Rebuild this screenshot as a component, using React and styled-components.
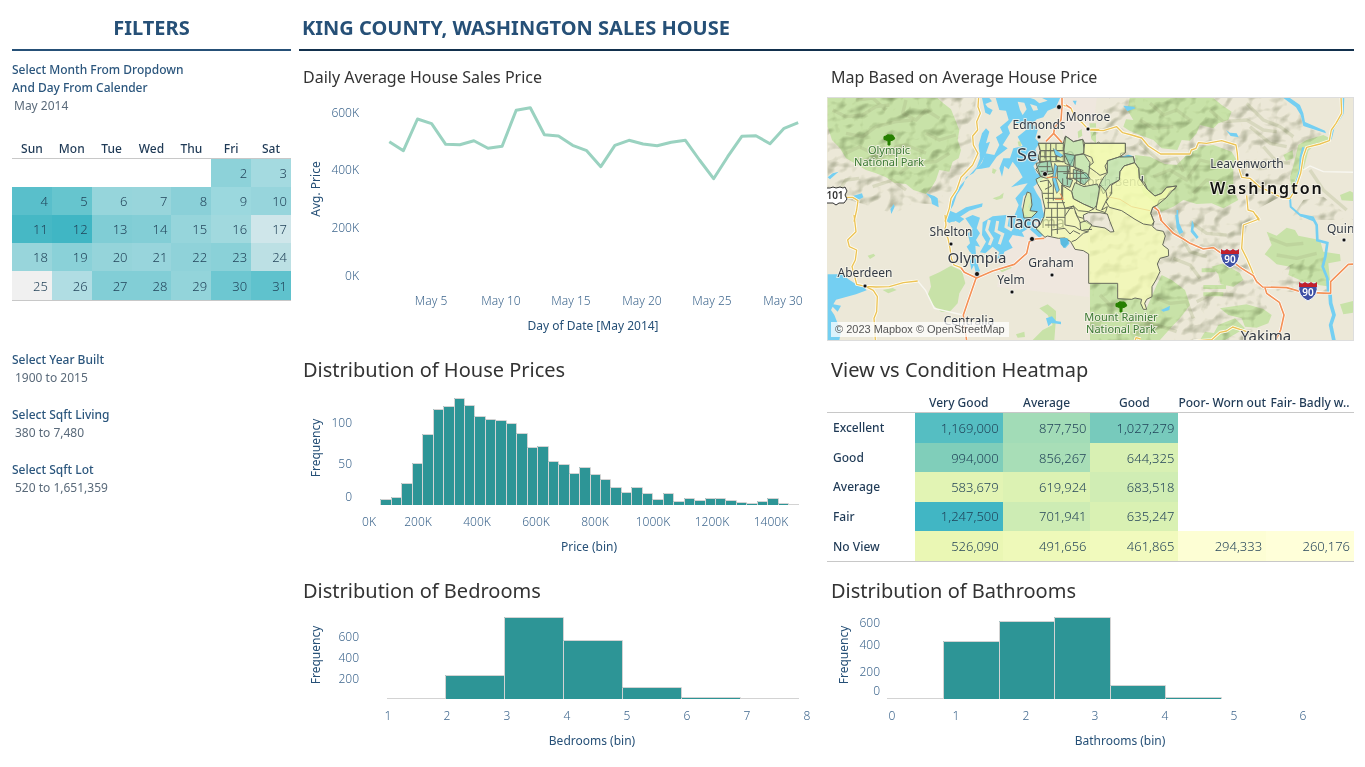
import React from "react";
import styled, { createGlobalStyle } from "styled-components";

const FONT = '"Noto Sans", "Open Sans", "Liberation Sans", sans-serif';
const TEAL = "#2d9596";

const GlobalStyle = createGlobalStyle`
  * { box-sizing: border-box; }
  body { margin: 0; background: #fff; font-family: ${FONT}; font-size: 12px; color: #1f3a56; }
`;

/* ---------- page frame ---------- */

const Page = styled.div`
  display: grid;
  grid-template-columns: 279px minmax(0, 1fr);
  column-gap: 8px;
  padding: 0 11px 0 12px;
`;

const Heading = styled.h1`
  margin: 0;
  padding: 6px 3px 0;
  height: 51px;
  line-height: 43px;
  font-size: 20px;
  font-weight: 700;
  white-space: nowrap;
  color: #265077;
  text-align: ${(p) => p.$align || "left"};
  border-bottom: 2px solid ${(p) => p.$rule};
`;

const Panels = styled.div`
  display: grid;
  grid-template-columns: minmax(0, 528fr) minmax(0, 527fr);
`;

const Panel = styled.section`
  min-width: 0;
`;

const PanelTitle = styled.h2`
  margin: ${(p) => (p.$small ? "6px" : "9px")} 0 0;
  padding-left: 4px;
  line-height: 40px;
  font-size: ${(p) => (p.$small ? "16px" : "20px")};
  font-weight: 400;
  color: #333;
  white-space: nowrap;
`;

/* ---------- sidebar ---------- */

const FilterGroup = styled.div`
  padding-top: ${(p) => p.$top}px;
  line-height: 18px;
`;

const FilterLabel = styled.label`
  display: block;
  font-weight: 500;
  color: #2b567d;
`;

const FilterValue = styled.output`
  display: block;
  padding-left: 3px;
  color: #5a6a7a;
`;

const MonthSelect = styled.select`
  display: block;
  appearance: none;
  height: 18px;
  margin: 0;
  padding: 0 0 0 2px;
  border: 0;
  background: none;
  font: 400 12px/18px ${FONT};
  color: #5a6a7a;
`;

const Calendar = styled.table`
  width: 100%;
  height: 162px;
  margin-top: 24px;
  table-layout: fixed;
  border-collapse: collapse;
  border-bottom: 1px solid #c8c8c8;
`;

const DayName = styled.th`
  height: 19px;
  padding: 1px 0 0;
  line-height: 17px;
  border-bottom: 1px solid #c8c8c8;
  font-weight: 500;
`;

const Day = styled.td`
  padding: 0 4px 0 0;
  text-align: right;
  font-size: 13px;
  font-weight: 300;
  color: #1f3f56;
  background: ${(p) => p.$tone || "transparent"};
`;

/* ---------- heat map ---------- */

const Heat = styled.table`
  width: 100%;
  height: 172px;
  table-layout: fixed;
  border-collapse: collapse;
`;

const HeatHead = styled.th`
  height: 22px;
  padding: 4px 0 0;
  line-height: 18px;
  font-weight: 500;
  white-space: nowrap;
  border-bottom: 1px solid #c8c8c8;
`;

const HeatRowName = styled.th`
  padding: 0 0 0 6px;
  text-align: left;
  font-weight: 500;
`;

const HeatCell = styled.td`
  padding: 0 4px 0 0;
  text-align: right;
  font-size: 13px;
  font-weight: 300;
  color: #1f3f56;
  background: ${(p) => p.$tone || "transparent"};
`;

const HeatBody = styled.tbody`
  border-bottom: 1px solid #c8c8c8;
`;

/* ---------- charts ---------- */

const ChartSvg = styled.svg`
  display: block;
  width: 100%;
  height: auto;
  font-family: ${FONT};
  font-size: 12px;
`;

const Tick = styled.text`
  fill: #3f678e;
  font-weight: 300;
`;

const AxisTitle = styled.text`
  fill: #265077;
  font-weight: 450;
  text-anchor: middle;
`;

function Chart({ width, height, yTicks, yTickX, xTicks, xTickY, xTitle, yTitle, children, label }) {
  return (
    <ChartSvg viewBox={`0 0 ${width} ${height}`} role="img" aria-label={label}>
      <AxisTitle transform={`translate(21 ${yTitle[1]}) rotate(-90)`}>{yTitle[0]}</AxisTitle>
      {yTicks.map(([t, y]) => (
        <Tick key={t} x={yTickX} y={y} textAnchor="end">{t}</Tick>
      ))}
      {xTicks.map(([t, x]) => (
        <Tick key={t} x={x} y={xTickY} textAnchor="middle">{t}</Tick>
      ))}
      <AxisTitle x={xTitle[1]} y={xTickY + 25}>{xTitle[0]}</AxisTitle>
      {children}
    </ChartSvg>
  );
}

const PRICE_LINE = [
  425, 452, 357, 371, 433, 434, 422, 445, 439, 331, 323, 404, 408, 436, 452,
  500, 436, 421, 432, 437, 427, 421, 480, 536, 470, 409, 407, 431, 385, 368,
].map((v, i) => `${(90.3 + i * 14.1).toFixed(1)},${(v / 3 - 97).toFixed(1)}`).join(" ");

const PRICE_BINS = [
  16, 22, 64, 124, 211, 286, 295, 319, 298, 265, 257, 253, 244, 214, 172, 175,
  131, 121, 94, 113, 91, 76, 53, 37, 53, 34, 16, 34, 10, 19, 13, 19, 19, 13,
  7, 4, 10, 19, 4,
].map((v) => v / 3);

function Bars({ x, step, base, heights, lineFrom, lineTo }) {
  const edge = (i) => Math.round(x + step * i);
  return (
    <g>
      <path d={`M${lineFrom} ${base - 0.5}H${lineTo}`} stroke="#d3d3d3" />
      {heights.map((h, i) => {
        const top = base - Math.ceil(h);
        return (
          <g key={i}>
            <rect x={edge(i)} y={top} width={edge(i + 1) - edge(i)} height={base - top} fill={TEAL} />
            <path d={`M${edge(i) + 0.5} ${base}V${top + 0.5}H${edge(i + 1) + 0.5}V${base}`} fill="none" stroke="#d3d3d3" />
          </g>
        );
      })}
    </g>
  );
}

/* ---------- map ---------- */

const MapFrame = styled.div`
  position: relative;
  border-right: 1px solid #ddd;
`;

const Attribution = styled.small`
  position: absolute;
  left: 4px;
  bottom: 4px;
  padding: 0 4px;
  line-height: 15px;
  font-family: "Liberation Sans", Arial, sans-serif;
  font-size: 11px;
  color: #555;
  background: rgba(255, 255, 255, 0.75);
`;

const Relief = styled.g`
  mix-blend-mode: multiply;
  opacity: 0.55;
`;

const Place = styled.text`
  font-size: ${(p) => p.$size || 12}px;
  text-anchor: ${(p) => p.$anchor || "middle"};
  fill: ${(p) => p.$color || "#333a45"};
  stroke: #f6f4ea;
  stroke-width: 2px;
  stroke-opacity: 0.8;
  paint-order: stroke;
`;

const StateName = styled(Place)`
  font-weight: 600;
  letter-spacing: 2px;
  fill: #111;
`;

/* Artwork groups are drawn three units to the pixel. */
const at = (x, y) => `translate(${x} ${y}) scale(.33333)`;
const NW = at(-1, -7);
const NE = at(263, -7);
const SW = at(-1, 118);
const SE = at(263, 118);
const COUNTY = at(193, 33);

const GREENS = [
  [NW, "M5 20H330L352 40 375 58 388 90 400 120 395 150 405 180 398 205 380 215 370 245 340 240 330 270 318 290 300 312 262 300 240 282 205 278 180 262 150 250 120 240 95 225 60 205 42 175 18 150 5 110Z"],
  [NW, "M500 235L512 240 505 252 498 248ZM500 325L520 318 533 308 530 325 512 330ZM575 155L588 152 585 168 578 168ZM755 125l12-8 2 20-12 8ZM790 100l20 0v60l-14-12Z"],
  [NE, "M120 20H365L395 45 425 65 415 90 385 100 370 115 330 105 320 130 300 152 275 150 262 180 215 175 190 150 150 135 118 122 100 110 108 88 130 90 112 60Z"],
  [NE, "M135 195L180 200 225 222 260 225 290 195 330 170 370 165 425 185 440 210 430 235 430 300 445 330 400 355 365 340 320 342 280 330 250 350 215 365 195 340 160 310 140 260Z"],
  [NE, "M625 165L650 150 700 135 720 145 712 160 680 160 655 182 640 240 620 260 605 300 600 260 612 220ZM580 195l28-15 2 25-22 8ZM750 315l30-12 10 5v25l-35-2Z"],
  [SE, "M530 50L560 62 590 38 615 45 625 62 690 75 700 110 750 118 752 138 715 145 722 215 650 205 618 190 595 180 600 155 560 148 540 130 524 118 545 90Z"],
  [SE, "M365 155L400 145 450 175 460 195 430 215 392 208 385 178ZM335 160l45 0-5 12-40 0ZM340 210l68 0v12l-68 0ZM340 232l60 0v12l-60 0Z"],
  [SE, "M0 205H82V250H150L165 290 200 210 215 180 245 195 285 225 300 270 270 310 250 330 210 375H0Z"],
  [SE, "M390 280L470 268 520 282 545 300 535 325 500 338 465 335 455 310 415 300ZM385 330l50-20 30 30-60 35h-45ZM345 350l30 5-15 20h-30ZM750 268l40-10v35l-30 5Z"],
  [SW, "M310 185L340 172 375 152 408 168 418 205 400 235 395 265 370 292 345 290 318 268 305 240 315 215Z"],
  [SW, "M640 280L665 268 690 288 690 310 685 375H620L650 345 680 330 665 300ZM125 122l18-6 5 6-16 10ZM170 225l30-6 12 6-25 10ZM570 358l25-8 2 16-22 2ZM520 165l30-12 8 5-30 14Z"],
];

const MOUNTAINS = [
  [NW, "M5 20H450L440 140 450 190 420 240 385 300 360 345 280 340 200 370 120 345 5 310Z"],
  [NE, "M60 20H620L640 110 700 130 640 170 610 300 440 390H0V150Z"],
  [SE, "M0 0H500L455 120 520 220 600 150 700 110 715 240 590 230 510 225 540 300 460 375H0Z"],
  [NE, "M640 330L700 320 790 390H600Z"],
];

const RIDGES = [
  [NW, "M20 60L60 80 110 75 150 50 190 45M60 130L110 140 150 110 210 95 260 90M150 220L210 170 240 165 300 190M240 30L230 70 270 90 300 60 340 85M60 190L100 170 140 190 175 165M220 250L260 220 330 215 370 190M20 330L60 270 100 265M140 290L200 270 240 300M300 130L340 150 390 135M90 30L140 24 180 60"],
  [NE, "M180 40L220 75 260 60 300 90M150 90L190 115 250 110M360 60L400 95 470 90 520 120 560 125M470 40L520 90 570 110 610 140M480 110L540 160 590 170M150 160L210 215 260 205 280 245M190 260L240 240 290 270 330 210 370 220M310 310L350 270 410 280M520 170L560 215 600 220M660 240L700 300 770 360"],
  [SE, "M225 30L270 60 300 110 350 125M250 130L300 150 330 190M300 20L350 55 410 60M200 250L240 265 290 260 310 310M320 260L370 235 430 240M30 240L60 270 110 265M120 320L200 330 260 350M540 70L590 90 640 85M560 120L620 130 680 115"],
];

const WATERS = [
  [NW, "M468 24H490L498 34 478 42 485 52 500 60 492 75 478 68Z"],
  [NW, "M508 20H704L690 52 665 62 652 82 632 88 620 102 636 118 628 145 640 160 628 178 640 208 622 228 632 250 655 262 640 275 622 290 632 310 645 330 650 360 662 395H602L620 372 606 350 618 325 610 305 592 318 586 350 598 390H560L578 345 568 325 590 300 605 280 580 285 555 292 590 262 575 235 560 215 548 238 535 228 528 260 520 235 532 205 552 205 562 175 590 168 575 140 600 120 590 98 578 105 560 90 545 110 552 130 530 165 545 175 512 200 490 232 466 236 450 238 468 218 478 190 505 195 520 165 510 142 530 128 522 112 548 90 540 62 520 60Z"],
  [NW, "M480 115L490 125 480 160 492 155 478 195 465 220 442 250 420 262 412 285 392 315 382 345 372 362 390 370 420 352 470 340 468 350 430 362 400 382 385 395H357L362 370 385 320 400 290 428 258 452 232 462 205 458 165 468 130Z"],
  [NW, "M80 318L108 310 112 322 92 332ZM300 310L325 318 335 325 338 352 318 342 315 326ZM5 262L20 250 38 245 30 252 12 268ZM203 342L206 350 196 372 193 358ZM740 32l12 0-4 14Z"],
  [SW, "M357 0H395L415 12 400 24 385 16 370 24 362 18ZM418 10L440 0 462 8 452 40 462 55 450 75 462 95 448 92 450 120 432 112 422 95 432 85 425 55 440 42ZM470 22L500 4 540 0H600L620 18 652 60 640 68 608 40 588 52 595 66 560 60 548 78 560 98 535 110 530 125 512 132 520 112 500 95 478 115 462 112 480 80 468 60Z"],
  [SW, "M5 178H52L66 192 88 206 108 210 122 226 90 238 60 246 30 254 22 268 45 272 35 290 20 275 15 285 25 300 45 350 40 375H5Z"],
  [SW, "M438 105L450 135 462 168 450 176 444 150 436 165 432 140ZM704 72L728 70 730 86 718 100 706 88ZM660 310l18-6 12 14 15 2 0 8-28-4-10 10Z"],
  [NE, "M580 24H600L630 45 640 70 645 96 705 122 708 130 640 108 632 75 618 52ZM100 47L132 50 136 55 112 64ZM408 120L420 128 440 130 446 142 422 138Z"],
  [SE, "M256 0H264L268 25 280 52 268 58 260 40ZM306 15L312 30 310 45 326 66 320 72 302 50ZM213 285L225 280 240 272 238 285 220 290Z"],
];

const SOUND_LAND = [
  "M600 20L640 20 665 32 640 40 625 28Z",
  "M575 35L595 38 602 58 590 75 582 60Z",
  "M612 42L632 48 636 60 622 62Z",
  "M560 250L572 262 562 272Z",
];
const INLETS = [
  "M490 15L482 45 498 70 490 90",
  "M515 18L510 48 530 58 520 88",
  "M545 5L540 35 558 46",
  "M575 10L570 30 585 42",
];

const RIVERS = [
  [NE, "M760 20L758 70 730 115 722 148M640 172L632 200 630 240 612 300 600 322 602 350 630 375 672 392", 6],
  [SE, "M630 0L668 8 680 30 682 76 712 84 706 125 698 155 712 190 715 235", 8],
  [SE, "M720 235L722 265 732 300 722 330 732 378", 11],
  [NE, "M262 360V395", 5],
];

const YELLOW_ROADS = [
  [NW, "M458 20L456 50 463 70 452 95 455 120 440 138 442 165 456 190 440 225 405 262 392 300 375 325 370 355 357 395"],
  [NW, "M62 322L80 322 96 332 92 360 84 395"],
  [NW, "M710 45L735 55 745 78 770 100 787 118 820 118"],
  [SW, "M84 0L90 50 65 75 70 95 92 105 88 135 78 155 86 185 92 208 118 214 150 216 190 215 232 203 275 198"],
  [SW, "M118 214L142 226 154 245 152 290 144 310 148 375"],
  [SW, "M357 0L360 30 355 50 366 70 372 100 376 130 384 150 405 158 415 172"],
  [NE, "M0 120L40 122 80 110 98 128 125 135 155 144 175 168 212 192 300 192 304 180 318 175 325 158 350 160 395 152 438 165 442 190 445 230 455 262 480 265 508 290 550 310 580 325 600 325"],
  [NE, "M753 20L755 70 738 100 724 120 718 152 690 162 650 172 640 200 632 250 615 300 600 325"],
  [NE, "M470 316L474 360 490 365 508 392"],
  [SE, "M498 0L507 12 460 30 455 100 470 130 485 165 500 205"],
  [SE, "M310 378L365 374 390 352 410 348 428 336 470 350M135 378L138 368 152 372"],
];

const ORANGE_ROADS = [
  [NW, "M708 20L708 50 705 90 686 112 683 130 660 154M683 130L708 158M720 45L735 55"],
  [SW, "M422 378L412 300 425 262 450 190 500 168 565 148 602 115 610 80 628 72 655 70M450 188L415 172 405 158"],
  [NE, "M188 348L205 362 215 392"],
  [SE, "M210 0L212 15 250 55 280 72 300 85 340 102 370 98 415 130 455 160 490 182 500 200 518 216 590 218 640 232 722 235 722 200 775 148 795 147"],
  [SE, "M525 218L530 235 568 262 582 300 572 345 556 378"],
];

const WHITE_ROADS = [
  [SW, "M275 198L298 225 325 280 410 300"],
  [NE, "M640 240L660 228 700 245 795 247"],
];

const YELLOW = "#f3fcae";
const LIME = "#dcefac";
const GREEN = "#a9d8ae";
const AQUA = "#6cbfb2";

const COUNTY_SHAPE =
  "M55 40H130L135 20 145 24 160 35 188 28 194 40H230L236 36 240 40H316V68L302 70 300 82 340 80 344 98 356 115 358 145 375 160 382 178 405 198 425 190 440 172 470 168 464 178 450 184 438 204 418 210 412 225 398 232 392 250 402 275 398 290 410 300 430 304 436 318 428 345 445 358 446 378 420 385 412 402 420 425 408 450 396 470 396 500 380 508 374 520 380 538 370 538 362 520 365 508 345 504 335 508 293 506V460H206V372L190 362 165 358 152 335 135 324 115 325 82 318 75 322 48 296 60 285 72 260 75 235 68 205 66 185 52 160 48 148 62 140 48 118 60 100 55 80 62 60Z";

const ZIPS = [
  [LIME, "M55 40H130V62H60Z"],
  [LIME, "M62 62H132V95H60Z"],
  [AQUA, "M48 100L92 92 100 130 75 135 62 140Z"],
  [GREEN, "M137 18L160 35 188 28 194 70 165 76 150 106 135 100 132 60Z"],
  [YELLOW, "M194 40H316V68L300 80 265 92 255 108 262 128 240 136 230 128 205 110 220 98 215 82 190 72Z"],
  [GREEN, "M165 76L192 72 210 98 205 145 180 120 165 115Z"],
  [AQUA, "M160 118L200 130 210 145 192 165 160 145Z"],
  [AQUA, "M112 108H150L140 145 158 150 150 172 128 165 112 145Z"],
  [AQUA, "M132 70L165 76 160 110 150 108Z"],
  [GREEN, "M262 92L300 80 340 80 344 98 312 108 300 125 298 150 270 165 250 192 238 165 252 140 262 130Z"],
  [YELLOW, "M344 98L356 115 358 145 382 178 405 198 425 190 440 172 470 168 438 204 412 225 398 232 392 250 402 275 395 286 370 282 345 268 305 242 268 232 258 215 275 190 275 165 298 150 300 125 312 108Z"],
  [GREEN, "M165 158L192 170 232 162 240 180 230 225 222 236 190 222 160 206 155 185Z"],
  [YELLOW, "M125 165L155 185 160 206 190 222 222 236 205 245 175 242 160 228 135 235 125 205Z"],
  [YELLOW, "M240 165L258 185 262 205 245 240 262 230 256 248 228 238Z"],
  [LIME, "M180 278L200 272 216 285 202 305 182 300Z"],
];

const COUNTY_LINES =
  "M78 40V95M92 40V92M108 40V95M60 80H130M75 62V85M55 110H92M62 124H98M82 92V130M112 62L108 90 130 96M150 108V150M130 130H192M140 145H205M112 125H150M128 145V205M142 108V165M170 120V160M182 122V162M60 155L85 150 95 168 75 178M68 190H100M85 150V235M100 140V212M75 205H128M82 218H135M75 235H160M95 235V318M112 218V312M135 235V285M78 262H135M75 285H112M95 300L135 295 150 312 160 302 180 312M135 258L150 235 160 228 172 260 182 280M135 285L165 290 180 300M160 110L190 122M165 245L172 260 190 265M206 305L190 310 168 330 155 335M190 300L216 298M62 140L80 145 100 138 112 145";

function Layer({ items, ...rest }) {
  return items.map(([t, d, w], i) => (
    <path key={i} transform={t} d={d} {...rest} strokeWidth={w || rest.strokeWidth} />
  ));
}

function Interstate({ x, y }) {
  return (
    <g transform={`translate(${x} ${y})`}>
      <path d="M-9-7Q-7-9-5-8-2-9 0-8 2-9 5-8 7-9 9-7 11 5 0 10-11 5-9-7Z" fill="#3f51a5" stroke="#fff" />
      <path d="M-9-4V-9L-6-7-3-9 0-7 3-9 6-7 9-9V-4Z" fill="#c2202c" />
      <text y="5" textAnchor="middle" fontSize="10" fontWeight="600" fill="#fff">90</text>
    </g>
  );
}

function Tree({ x, y }) {
  return (
    <path
      transform={`translate(${x} ${y})`}
      d="M-1 6V2L-3 1Q-6 1-5-1-6-3-3-3-2-5 1-4 4-5 5-2 7 0 4 1L1 2V6Z"
      fill="#268000"
      stroke="#268000"
    />
  );
}

function Park({ x, y, lines }) {
  return (
    <>
      <Tree x={x} y={y - 15} />
      <Place y={y} $size={11} $color="#3c7a34">
        {lines.map((l, i) => <tspan key={l} x={x} dy={i * 12}>{l}</tspan>)}
      </Place>
    </>
  );
}

const DOTS = [
  [212, 40, 1.5], [261, 32, 1.5], [232, 10, 2], [218, 77, 2], [124, 147, 1.5], [150, 177, 2], [205, 142, 2],
  [38, 189, 1.5], [225, 178, 1.5], [185, 195, 1.5], [420, 78, 1.5], [517, 143, 1.5],
];

const PLACES = [
  ["Edmonds", 212, 32], ["Monroe", 261, 24], ["Leavenworth", 420, 71], ["Shelton", 124, 139], ["Aberdeen", 38, 180],
  ["Graham", 224, 170], ["Yelm", 184, 187], ["Centralia", 142, 228],
];

function PriceMap() {
  return (
    <MapFrame>
      <ChartSvg viewBox="0 0 526 244" role="img" aria-label="Map of average house price around King County">
        <defs>
          <filter id="relief" x="0" y="0" width="100%" height="100%" colorInterpolationFilters="sRGB">
            <feTurbulence type="fractalNoise" baseFrequency="0.06 0.07" numOctaves="2" seed="8" result="n" />
            <feColorMatrix values="0 0 0 0 0  0 0 0 0 0  0 0 0 0 0  1 0 0 0 0" />
            <feDiffuseLighting surfaceScale="6" lightingColor="#fff">
              <feDistantLight azimuth="225" elevation="52" />
            </feDiffuseLighting>
            <feColorMatrix values=".8 0 0 0 .39  .75 0 0 0 .43  .9 0 0 0 .3  0 0 0 1 0" />
          </filter>
          <clipPath id="mountains">
            {MOUNTAINS.map(([t, d], i) => <path key={i} transform={t} d={d} />)}
          </clipPath>
        </defs>
        <rect width="527" height="244" fill="#ece8d8" />
        <path d="M230 0H270L262 60 240 60ZM185 120H260L262 200 170 190Z" fill="#efe7de" />
        <Layer items={GREENS} fill="#c8e2a8" />
        <g fill="none" stroke="#a9b283" strokeOpacity=".3" strokeWidth="10" strokeLinejoin="round">
          {RIDGES.map(([t, d], i) => <path key={i} transform={t} d={d} />)}
        </g>
        <Relief clipPath="url(#mountains)">
          <rect width="527" height="244" filter="url(#relief)" />
        </Relief>
        <Layer items={WATERS} fill="#74cff2" />
        <g transform={NW} fill="#ece8d8">{SOUND_LAND.map((d) => <path key={d} d={d} />)}</g>
        <g transform={SW} fill="none" stroke="#ece8d8" strokeWidth="9">{INLETS.map((d) => <path key={d} d={d} />)}</g>
        <Layer items={RIVERS} fill="none" stroke="#74cff2" />
        <Layer items={WHITE_ROADS} fill="none" stroke="#f8f7f1" strokeWidth="4" />
        <Layer items={YELLOW_ROADS} fill="none" stroke="#fffdf2" strokeWidth="9" strokeLinejoin="round" />
        <Layer items={YELLOW_ROADS} fill="none" stroke="#ecc355" strokeWidth="4" strokeLinejoin="round" />
        <Layer items={ORANGE_ROADS} fill="none" stroke="#fff" strokeWidth="9" strokeLinejoin="round" />
        <Layer items={ORANGE_ROADS} fill="none" stroke="#f49257" strokeWidth="5" strokeLinejoin="round" />

        <Place x="190" y="64" $size={18} $anchor="start">Seattle</Place>
        <Place x="180" y="131" $size={16} $anchor="start">Tacoma</Place>
        <Place x="284" y="89">North Bend</Place>
        <circle cx="284" cy="96" r="1.5" />

        <g transform={COUNTY} stroke="#666a5c" strokeWidth="3" strokeLinejoin="round">
          <path
            d={COUNTY_SHAPE + "M190 255L205 248 240 248 262 252 270 275 282 305 272 306 255 294 218 288 192 272Z"}
            fill={YELLOW} fillOpacity=".7" fillRule="evenodd"
          />
          {ZIPS.map(([c, d]) => <path key={d} d={d} fill={c} fillOpacity=".55" />)}
          <path d="M22 186L32 190 36 225 30 242 52 245 35 262 12 264 8 240 15 205Z" fill={LIME} fillOpacity=".85" />
          <path d={COUNTY_LINES} fill="none" />
          <path d="M100 55L106 75 122 82 130 76M104 100L112 110 106 140 118 180 110 190 104 170 98 150 100 130Z" fill="#74cff2" strokeWidth="2" />
          <path d="M80 142H112M105 208H130L120 190" fill="none" stroke="#f49257" />
          <path d="M305 80L325 74 340 79ZM120 325L142 324 145 340 132 355 122 342Z" fill="#5bbbe0" stroke="none" />
          <path d="M262 200L300 208 335 230 390 242" fill="none" stroke="#efdf94" />
        </g>

        {DOTS.map(([x, y, r]) => (
          <circle key={x} cx={x} cy={y} r={r + 0.5} fill="#111" stroke="#fff" strokeOpacity=".7" />
        ))}
        {PLACES.map(([name, x, y]) => <Place key={name} x={x} y={y}>{name}</Place>)}
        <Place x="150" y="166" $size={15}>Olympia</Place>
        <Place x="439" y="244" $size={15}>Yakima</Place>
        <Place x="500" y="136" $anchor="start">Quincy</Place>
        <StateName x="383" y="97" $size={16} $anchor="start">Washington</StateName>
        <Park x={62} y={57} lines={["Olympic", "National Park"]} />
        <Park x={294} y={224} lines={["Mount Rainier", "National Park"]} />
        <Interstate x={403} y={161} />
        <Interstate x={481} y={194} />
        <path d="M-2 91H3L6 90 9 91 13 90 16 91 18 90 20 94 18 98 20 102 17 106 12 106 9 108 6 106H-2Z" fill="#fff" stroke="#333" />
        <text x="8" y="102" textAnchor="middle" fontSize="10" fontWeight="600" fill="#333">101</text>
        <path d="M0 .5H527M0 243.5H527" stroke="#ddd" />
      </ChartSvg>
      <Attribution>© 2023 Mapbox © OpenStreetMap</Attribution>
    </MapFrame>
  );
}

/* ---------- data ---------- */

const WEEKDAYS = ["Sun", "Mon", "Tue", "Wed", "Thu", "Fri", "Sat"];
const WEEKS = [
  [null, null, null, null, null, [2, "#8dd2d9"], [3, "#a4dae0"]],
  [[4, "#59bfcb"], [5, "#66c5ce"], [6, "#96d5db"], [7, "#98d5db"], [8, "#8ad0d8"], [9, "#9bd8de"], [10, "#97d5dc"]],
  [[11, "#46b8c5"], [12, "#40b6c4"], [13, "#80cdd5"], [14, "#83ced6"], [15, "#96d5db"], [16, "#a1d9de"], [17, "#cfe6ea"]],
  [[18, "#98d5db"], [19, "#8ad1d8"], [20, "#95d4da"], [21, "#98d5dc"], [22, "#8fd2d9"], [23, "#8ad1d8"], [24, "#bce0e4"]],
  [[25, "#f0f0f0"], [26, "#b0dde3"], [27, "#82ced6"], [28, "#82ced6"], [29, "#93d4da"], [30, "#6dc7d1"], [31, "#5fc2cd"]],
];

const CONDITIONS = ["Very Good", "Average", "Good", "Poor- Worn out", "Fair- Badly w.."];
const HEAT_ROWS = [
  ["Excellent", ["1,169,000", "#55bec2"], ["877,750", "#a2dcb7"], ["1,027,279", "#77cabc"], null, null],
  ["Good", ["994,000", "#80ceba"], ["856,267", "#a8deb7"], ["644,325", "#d8f0b3"], null, null],
  ["Average", ["583,679", "#e2f4b4"], ["619,924", "#dcf2b3"], ["683,518", "#d0edb4"], null, null],
  ["Fair", ["1,247,500", "#41b6c4"], ["701,941", "#cdecb4"], ["635,247", "#d9f1b3"], null, null],
  ["No View", ["526,090", "#eaf7b4"], ["491,656", "#eef9b9"], ["461,865", "#f1fabd"], ["294,333", "#fdfed4"], ["260,176", "#ffffd9"]],
];

const RANGES = [
  ["year", "Select Year Built", "1900 to 2015", 50],
  ["living", "Select Sqft Living", "380 to 7,480", 19],
  ["lot", "Select Sqft Lot", "520 to 1,651,359", 19],
];

export default function App() {
  return (
    <>
      <GlobalStyle />
      <Page>
        <aside>
          <Heading as="h2" $align="center" $rule="#265077">FILTERS</Heading>
          <FilterGroup $top={10}>
            <FilterLabel htmlFor="month">Select Month From Dropdown<br />And Day From Calender</FilterLabel>
            <MonthSelect id="month" defaultValue="May 2014">
              <option>May 2014</option>
            </MonthSelect>
          </FilterGroup>
          <Calendar>
            <thead>
              <tr>{WEEKDAYS.map((d) => <DayName key={d} scope="col">{d}</DayName>)}</tr>
            </thead>
            <tbody>
              {WEEKS.map((week, i) => (
                <tr key={i}>
                  {week.map((day, j) => <Day key={j} $tone={day && day[1]}>{day && day[0]}</Day>)}
                </tr>
              ))}
            </tbody>
          </Calendar>
          {RANGES.map(([id, name, value, top]) => (
            <FilterGroup key={id} $top={top}>
              <FilterLabel htmlFor={id}>{name}</FilterLabel>
              <FilterValue id={id}>{value}</FilterValue>
            </FilterGroup>
          ))}
        </aside>

        <main>
          <Heading $rule="#12304d">KING COUNTY, WASHINGTON SALES HOUSE</Heading>
          <Panels>
            <Panel>
              <PanelTitle $small>Daily Average House Sales Price</PanelTitle>
              <Chart
                label="Daily average house sales price"
                width={528} height={244}
                yTitle={["Avg. Price", 92]} yTickX={60}
                yTicks={[["600K", 20], ["400K", 77], ["200K", 135], ["0K", 183]]}
                xTickY={208} xTitle={["Day of Date [May 2014]", 294]}
                xTicks={[["May 5", 132], ["May 10", 202], ["May 15", 272], ["May 20", 343], ["May 25", 413], ["May 30", 484]]}
              >
                <polyline points={PRICE_LINE} fill="none" stroke="#9ad2c0" strokeWidth="3" strokeLinejoin="round" />
              </Chart>
            </Panel>
            <Panel>
              <PanelTitle $small>Map Based on Average House Price</PanelTitle>
              <PriceMap />
            </Panel>
            <Panel>
              <PanelTitle>Distribution of House Prices</PanelTitle>
              <Chart
                label="Distribution of house prices"
                width={528} height={172}
                yTitle={["Frequency", 58]} yTickX={53}
                yTicks={[["100", 37], ["50", 78], ["0", 111]]}
                xTickY={136} xTitle={["Price (bin)", 290]}
                xTicks={[["0K", 70], ["200K", 119], ["400K", 178], ["600K", 237], ["800K", 296], ["1000K", 354], ["1200K", 413], ["1400K", 472]]}
              >
                <Bars x={81.3} step={10.46} base={115} heights={PRICE_BINS} lineFrom={81} lineTo={500} />
              </Chart>
            </Panel>
            <Panel>
              <PanelTitle>View vs Condition Heatmap</PanelTitle>
              <Heat>
                <thead>
                  <tr>
                    <HeatHead aria-label="View" />
                    {CONDITIONS.map((c) => <HeatHead key={c} scope="col">{c}</HeatHead>)}
                  </tr>
                </thead>
                <HeatBody>
                  {HEAT_ROWS.map(([name, ...cells]) => (
                    <tr key={name}>
                      <HeatRowName scope="row">{name}</HeatRowName>
                      {cells.map((c, i) => <HeatCell key={i} $tone={c && c[1]}>{c && c[0]}</HeatCell>)}
                    </tr>
                  ))}
                </HeatBody>
              </Heat>
            </Panel>
            <Panel>
              <PanelTitle>Distribution of Bedrooms</PanelTitle>
              <Chart
                label="Distribution of bedrooms"
                width={528} height={150}
                yTitle={["Frequency", 44]} yTickX={60}
                yTicks={[["600", 30], ["400", 51], ["200", 72]]}
                xTickY={109} xTitle={["Bedrooms (bin)", 293]}
                xTicks={[["1", 89], ["2", 148], ["3", 208], ["4", 268], ["5", 328], ["6", 388], ["7", 448], ["8", 508]]}
              >
                <Bars x={146} step={59} base={88} heights={[24, 82, 59, 12, 2]} lineFrom={88} lineTo={500} />
              </Chart>
            </Panel>
            <Panel>
              <PanelTitle>Distribution of Bathrooms</PanelTitle>
              <Chart
                label="Distribution of bathrooms"
                width={527} height={150}
                yTitle={["Frequency", 44]} yTickX={53}
                yTicks={[["600", 16], ["400", 38], ["200", 65], ["0", 84]]}
                xTickY={109} xTitle={["Bathrooms (bin)", 293]}
                xTicks={[["0", 65], ["1", 129], ["2", 199], ["3", 268], ["4", 338], ["5", 407], ["6", 476]]}
              >
                <Bars x={116} step={55.6} base={88} heights={[58, 78, 82, 14, 2]} lineFrom={60} lineTo={117} />
              </Chart>
            </Panel>
          </Panels>
        </main>
      </Page>
    </>
  );
}
